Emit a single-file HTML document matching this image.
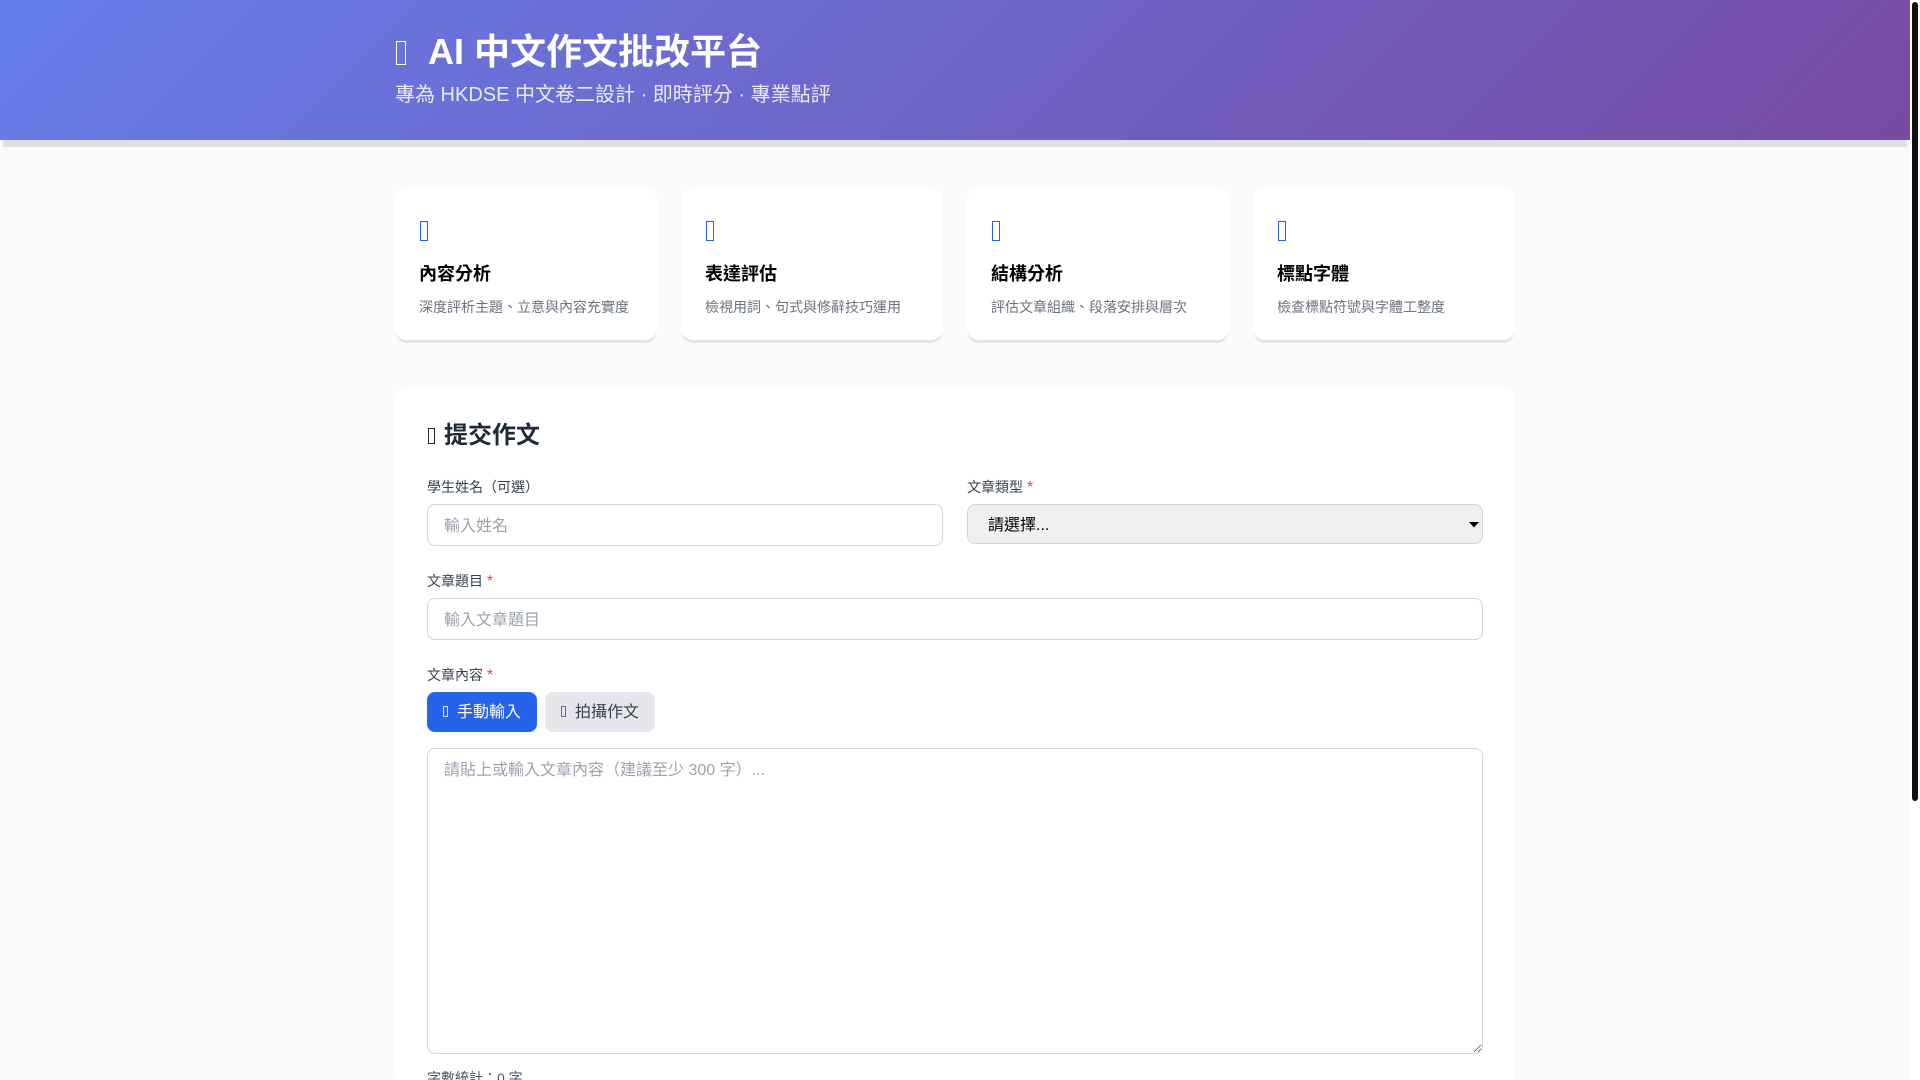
<!DOCTYPE html>
<html lang="zh-Hant">
<head>
<meta charset="utf-8">
<title>AI 中文作文批改平台</title>
<style>
*{box-sizing:border-box;margin:0;padding:0}
html,body{width:1920px;height:1080px;overflow:hidden;background:#fff}
body{position:relative;font-family:"Liberation Sans","Noto Sans CJK TC",sans-serif}
.a{position:absolute;white-space:nowrap}
.bg{position:absolute;left:0;top:0;width:1910px;height:1080px;background:#f9fafb}
.hdr{position:absolute;left:0;top:0;width:1910px;height:140px;background:linear-gradient(135deg,#667eea 0%,#764ba2 100%)}
.band{position:absolute;left:3px;top:140px;width:1904px;height:7px;background:#dfe0e2}
.tofu{position:absolute;border:1px solid currentColor}
.card{position:absolute;top:188px;width:262px;height:152px;background:#fff;border-radius:12px;box-shadow:0 4px 0 -1px #e2e4e7}
.ct{font-size:18px;font-weight:700;line-height:26px;color:#000;top:261px}
.cd{font-size:14px;line-height:20px;color:#6b7280;top:297px}
.form{position:absolute;left:395px;top:388px;width:1120px;height:700px;background:#fff;border-radius:12px}
.lb{font-size:14px;line-height:20px;color:#374151}
.lb b{font-weight:400;color:#ef4444;font-size:16px;line-height:16px}
input,textarea,select{position:absolute;font-family:inherit;font-size:16px;border:1px solid #d1d5db;border-radius:8px;outline:none}
input{padding:4px 16px 0;height:42px;background:#fff}
::placeholder{color:#9ca3af;opacity:1}
textarea{padding:10px 16px 6px;line-height:24px;background:#fff;resize:vertical}
select{left:967px;top:504px;width:516px;height:40px;padding:2px 16px 0 20px;background-color:#efefef;color:#000;appearance:none;-webkit-appearance:none}
.btn{position:absolute;top:692px;width:110px;height:40px;border-radius:8px;font-size:16px;line-height:40px}
.thumb{position:absolute;left:1912px;top:2px;width:6px;height:799px;background:#111;border-radius:3px}
</style>
</head>
<body>
<div class="bg"></div>
<div class="band"></div>
<div class="hdr"></div>
<span class="tofu" style="left:396px;top:41px;width:10px;height:24px;color:#fff"></span>
<div class="a" style="left:428px;top:27px;font-size:36px;font-weight:700;line-height:50px;color:#fff">AI 中文作文批改平台</div>
<div class="a" style="left:395px;top:81px;font-size:20px;line-height:28px;color:rgba(255,255,255,.85)">專為 HKDSE 中文卷二設計 · 即時評分 · 專業點評</div>

<div class="card" style="left:395px"></div>
<div class="card" style="left:681px"></div>
<div class="card" style="left:967px"></div>
<div class="card" style="left:1253px"></div>

<span class="tofu" style="left:420px;top:221px;width:8px;height:20px;color:#2563eb"></span>
<span class="tofu" style="left:706px;top:221px;width:8px;height:20px;color:#2563eb"></span>
<span class="tofu" style="left:992px;top:221px;width:8px;height:20px;color:#2563eb"></span>
<span class="tofu" style="left:1278px;top:221px;width:8px;height:20px;color:#2563eb"></span>

<div class="a ct" style="left:419px">內容分析</div>
<div class="a cd" style="left:419px">深度評析主題、立意與內容充實度</div>
<div class="a ct" style="left:705px">表達評估</div>
<div class="a cd" style="left:705px">檢視用詞、句式與修辭技巧運用</div>
<div class="a ct" style="left:991px">結構分析</div>
<div class="a cd" style="left:991px">評估文章組織、段落安排與層次</div>
<div class="a ct" style="left:1277px">標點字體</div>
<div class="a cd" style="left:1277px">檢查標點符號與字體工整度</div>

<div class="form"></div>
<span class="tofu" style="left:428px;top:428px;width:7px;height:16px;color:#1f2937"></span>
<div class="a" style="left:444px;top:419px;font-size:24px;font-weight:700;line-height:34px;color:#1f2937">提交作文</div>

<div class="a lb" style="left:427px;top:477px">學生姓名（可選）</div>
<input style="left:427px;top:504px;width:516px" placeholder="輸入姓名">
<div class="a lb" style="left:967px;top:477px">文章類型 <b>*</b></div>
<select><option>請選擇...</option></select>
<svg style="position:absolute;left:1468px;top:521px" width="12" height="7" viewBox="0 0 12 7"><polygon points="1,1 11,1 6,6.5" fill="#000"/></svg>

<div class="a lb" style="left:427px;top:571px">文章題目 <b>*</b></div>
<input style="left:427px;top:598px;width:1056px" placeholder="輸入文章題目">

<div class="a lb" style="left:427px;top:665px">文章內容 <b>*</b></div>
<div class="btn" style="left:427px;background:#2563eb;color:#fff"><span class="tofu" style="left:16px;top:14px;width:5px;height:11px;color:#dbe4fb"></span><span class="a" style="left:30px;top:1px">手動輸入</span></div>
<div class="btn" style="left:545px;background:#e5e7eb;color:#374151"><span class="tofu" style="left:16px;top:14px;width:5px;height:11px;color:#6b7280"></span><span class="a" style="left:30px;top:1px">拍攝作文</span></div>

<textarea style="left:427px;top:748px;width:1056px;height:306px" placeholder="請貼上或輸入文章內容（建議至少 300 字）..."></textarea>

<div class="a" style="left:427px;top:1068px;font-size:14px;line-height:20px;color:#4b5563">字數統計：0 字</div>

<div class="thumb"></div>
</body>
</html>
